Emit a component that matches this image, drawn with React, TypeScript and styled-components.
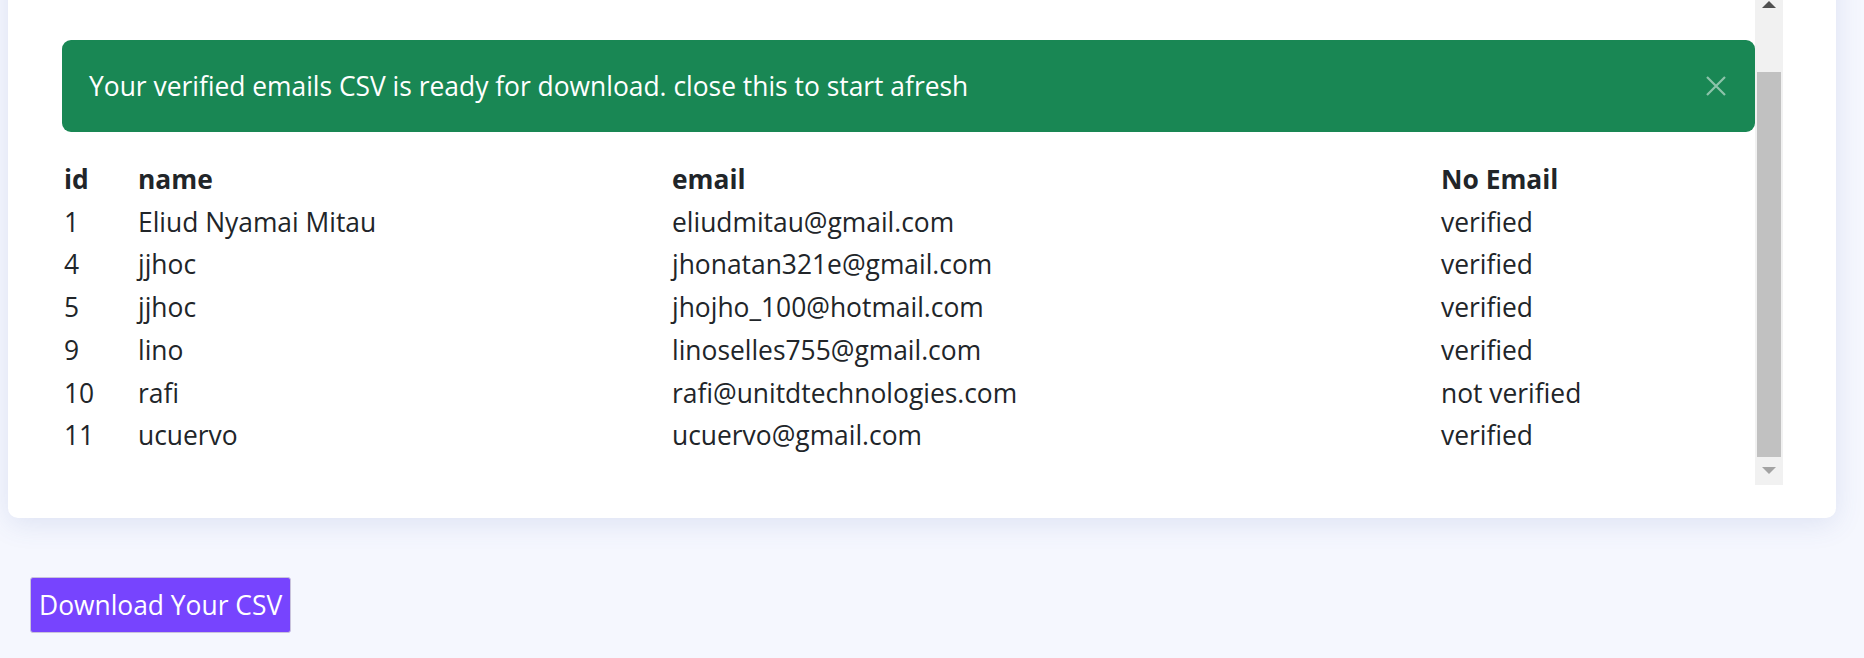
import React, { useLayoutEffect, useRef } from 'react';
import styled, { createGlobalStyle } from 'styled-components';

const GlobalStyle = createGlobalStyle`
  body {
    margin: 0;
    background: #f5f7fe;
    font-family: "Open Sans", "Noto Sans", sans-serif;
    color: #212529;
  }
`;

const Page = styled.main`
  display: flex;
  flex-direction: column;
  gap: 59px;
  margin-top: -43px;
  padding: 0 28px 25px 8px;
`;

const Card = styled.section`
  background: #ffffff;
  border-radius: 10px;
  padding: 33px 53px 33px 54px;
  box-shadow: 0 6px 28px rgba(70, 90, 170, 0.13);
`;

const Scroller = styled.div`
  display: flex;
  height: 495px;
`;

const Viewport = styled.div`
  flex: 1;
  min-width: 0;
  overflow: hidden;
`;

const Content = styled.div`
  padding: 118px 0 28px;
`;

// the scroll bar as the browser drew it
const Rail = styled.div`
  display: flex;
  flex-direction: column;
  width: 28px;
  flex-shrink: 0;
  background: #f1f1f1;
`;

const RailButton = styled.div<{ $dir: 'up' | 'down' }>`
  display: flex;
  align-items: center;
  justify-content: center;
  height: 28px;
  flex-shrink: 0;

  &::before {
    content: '';
    border-left: 7px solid transparent;
    border-right: 7px solid transparent;
    ${({ $dir }) =>
      $dir === 'up'
        ? 'border-bottom: 7px solid #505050; margin-top: 1px;'
        : 'border-top: 7px solid #a3a3a3; margin-top: -1px;'}
  }
`;

const Track = styled.div`
  flex: 1;
  display: flex;
  flex-direction: column;
  justify-content: flex-end;
  padding: 0 2px;
`;

const Thumb = styled.div`
  height: 385px;
  background: #c1c1c1;
`;

const Alert = styled.div`
  display: flex;
  align-items: center;
  justify-content: space-between;
  height: 92px;
  box-sizing: border-box;
  padding: 0 29px 0 27px;
  margin-bottom: 26px;
  background: #198754;
  color: #ffffff;
  border-radius: 9px;
  font-size: 26.4px;
  line-height: 38px;
`;

const Close = styled.button`
  display: flex;
  padding: 0;
  border: 0;
  background: none;
  opacity: 0.5;
  cursor: pointer;
`;

const Table = styled.table`
  width: 100%;
  table-layout: fixed;
  border-collapse: collapse;
  font-size: 26.4px;
`;

const Cell = styled.td<{ $w?: number }>`
  ${({ $w }) => ($w ? `width: ${$w}px;` : '')}
  box-sizing: border-box;
  padding: 0 0 0 2px;
  height: 42.7px;
  line-height: 42.7px;
  text-align: left;
  white-space: nowrap;
`;

const Head = styled(Cell).attrs({ as: 'th' })`
  font-weight: 700;
`;

const Bar = styled.div`
  padding-left: 22px;
`;

const Download = styled.button`
  height: 56px;
  padding: 0 8px;
  background: #7744fe;
  color: #ffffff;
  border: 1px solid #c9c3dc;
  border-radius: 3px;
  font-family: "Open Sans", "Noto Sans", sans-serif;
  font-size: 26.4px;
  cursor: pointer;
`;

const rows = [
  { id: 1, name: 'Eliud Nyamai Mitau', email: 'eliudmitau@gmail.com', status: 'verified' },
  { id: 4, name: 'jjhoc', email: 'jhonatan321e@gmail.com', status: 'verified' },
  { id: 5, name: 'jjhoc', email: 'jhojho_100@hotmail.com', status: 'verified' },
  { id: 9, name: 'lino', email: 'linoselles755@gmail.com', status: 'verified' },
  { id: 10, name: 'rafi', email: 'rafi@unitdtechnologies.com', status: 'not verified' },
  { id: 11, name: 'ucuervo', email: 'ucuervo@gmail.com', status: 'verified' },
];

export default function App() {
  const viewport = useRef<HTMLDivElement>(null);

  useLayoutEffect(() => {
    if (viewport.current) viewport.current.scrollTop = viewport.current.scrollHeight;
  }, []);

  return (
    <>
      <GlobalStyle />
      <Page>
        <Card>
          <Scroller>
            <Viewport ref={viewport}>
              <Content>
                <Alert role="alert">
                  <span>Your verified emails CSV is ready for download. close this to start afresh</span>
                  <Close aria-label="Close">
                    <svg width="20" height="20" viewBox="0 0 20 20">
                      <path d="M1 1L19 19M19 1L1 19" stroke="#ffffff" strokeWidth="2.2" />
                    </svg>
                  </Close>
                </Alert>
                <Table>
                  <thead>
                    <tr>
                      <Head $w={74}>id</Head>
                      <Head $w={534}>name</Head>
                      <Head $w={769}>email</Head>
                      <Head $w={316}>No Email</Head>
                    </tr>
                  </thead>
                  <tbody>
                    {rows.map((r) => (
                      <tr key={r.id}>
                        <Cell>{r.id}</Cell>
                        <Cell>{r.name}</Cell>
                        <Cell>{r.email}</Cell>
                        <Cell>{r.status}</Cell>
                      </tr>
                    ))}
                  </tbody>
                </Table>
              </Content>
            </Viewport>
            <Rail aria-hidden>
              <RailButton $dir="up" />
              <Track>
                <Thumb />
              </Track>
              <RailButton $dir="down" />
            </Rail>
          </Scroller>
        </Card>
        <Bar>
          <Download>Download Your CSV</Download>
        </Bar>
      </Page>
    </>
  );
}
